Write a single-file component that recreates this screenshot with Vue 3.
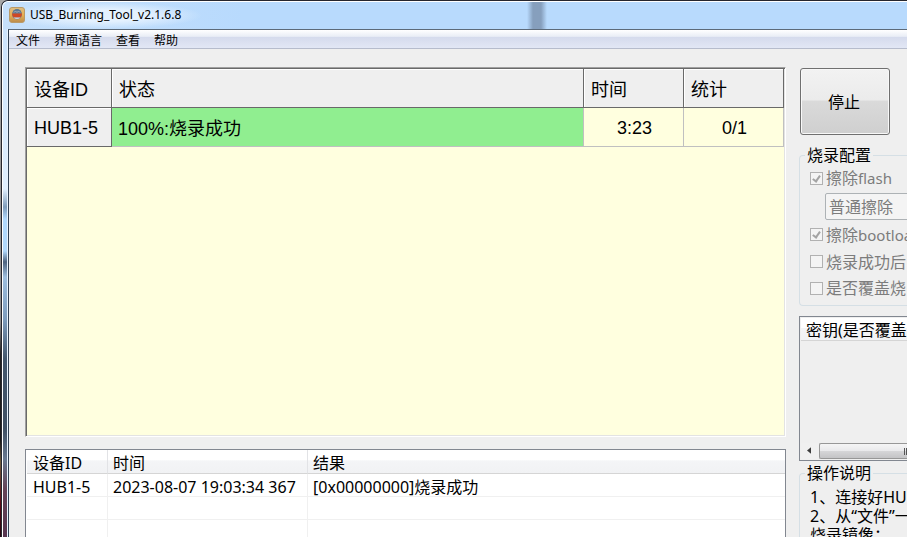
<template>
  <div class="desktop">
    <div class="window">
      <header class="titlebar">
        <svg class="app-icon" viewBox="0 0 16 16">
          <defs>
            <linearGradient id="gold" x1="0" y1="0" x2="0" y2="1">
              <stop offset="0" stop-color="#dcbd85" />
              <stop offset="0.5" stop-color="#e9b052" />
              <stop offset="1" stop-color="#b98a4c" />
            </linearGradient>
          </defs>
          <rect x="0.5" y="0.5" width="15" height="15" rx="2.5" fill="url(#gold)" stroke="#b99a68" />
          <circle cx="8" cy="7.5" r="5" fill="#7b8088" />
          <path d="M3.5 6.5 A4.5 4.5 0 0 1 12.5 6.5 Z" fill="#5b7895" />
          <path d="M5 5.5 L6.5 4 L8 5.5 L9.5 4 L11 5.5" stroke="#a9b0b8" stroke-width="1" fill="none" />
          <path d="M3 6.5 H13 Q13 9 11 10.5 H5 Q3 9 3 6.5 Z" fill="#cf4724" />
          <path d="M4.5 10.5 H11.5 Q8 13.5 4.5 10.5 Z" fill="#cfd3da" />
        </svg>
        <span class="title">USB_Burning_Tool_v2.1.6.8</span>
      </header>

      <div class="body">
        <div class="frame-left"></div>
        <div class="client">
          <nav class="menubar">
            <button v-for="item in menus" :key="item" type="button">{{ item }}</button>
          </nav>

          <div class="content">
            <main class="main">
              <div class="device-panel">
                <table class="device-table">
                  <thead>
                    <tr>
                      <th class="col-id">设备ID</th>
                      <th>状态</th>
                      <th class="col-num">时间</th>
                      <th class="col-num">统计</th>
                    </tr>
                  </thead>
                  <tbody>
                    <tr v-for="dev in devices" :key="dev.id">
                      <th>{{ dev.id }}</th>
                      <td class="status">{{ dev.status }}</td>
                      <td class="num">{{ dev.time }}</td>
                      <td class="num">{{ dev.count }}</td>
                    </tr>
                  </tbody>
                </table>
              </div>

              <div class="log-panel">
                <table class="log-table">
                  <thead>
                    <tr>
                      <th class="log-id">设备ID</th>
                      <th class="log-time">时间</th>
                      <th>结果</th>
                    </tr>
                  </thead>
                  <tbody>
                    <tr v-for="(log, index) in logs" :key="index">
                      <td>{{ log.id }}</td>
                      <td>{{ log.time }}</td>
                      <td>{{ log.result }}</td>
                    </tr>
                  </tbody>
                </table>
              </div>
            </main>

            <aside class="side">
              <button type="button" class="stop">停止</button>

              <fieldset class="group config">
                <legend>烧录配置</legend>
                <label class="check">
                  <input v-model="eraseFlash" type="checkbox" disabled />
                  <span>擦除<small>flash</small></span>
                </label>
                <select v-model="eraseMode" class="combo" aria-label="擦除flash" disabled>
                  <option>普通擦除</option>
                </select>
                <label class="check">
                  <input v-model="eraseBoot" type="checkbox" disabled />
                  <span>擦除<small>bootloader</small></span>
                </label>
                <label class="check">
                  <input v-model="reset" type="checkbox" disabled />
                  <span>烧录成功后</span>
                </label>
                <label class="check">
                  <input v-model="overwrite" type="checkbox" disabled />
                  <span>是否覆盖烧</span>
                </label>
              </fieldset>

              <div class="key-list">
                <div class="key-head">密钥(是否覆盖</div>
                <div class="key-body"></div>
                <div class="hscroll">
                  <button type="button" class="arrow" aria-label="left">
                    <svg viewBox="0 0 5 8"><path d="M5 0 V8 L0 4 Z" fill="#3c3c3c" /></svg>
                  </button>
                  <div class="thumb"><i></i></div>
                </div>
              </div>

              <fieldset class="group guide">
                <legend>操作说明</legend>
                <p v-for="line in guide" :key="line">{{ line }}</p>
              </fieldset>
            </aside>
          </div>
        </div>
      </div>
    </div>
  </div>
</template>

<script setup>
import { ref } from 'vue';

const menus = ['文件', '界面语言', '查看', '帮助'];

// 设备列表
const devices = ref([
  { id: 'HUB1-5', status: '100%:烧录成功', time: '3:23', count: '0/1' }
]);

// 烧录记录, 后面是空行
const logs = ref([
  { id: 'HUB1-5', time: '2023-08-07 19:03:34 367', result: '[0x00000000]烧录成功' },
  {},
  {}
]);

// 烧录配置
const eraseFlash = ref(true);
const eraseMode = ref('普通擦除');
const eraseBoot = ref(true);
const reset = ref(false);
const overwrite = ref(false);

const guide = ['1、连接好HUB', '2、从“文件”一', '烧录镜像；'];
</script>

<style>
body {
  margin: 0;
  overflow: hidden;
}
</style>

<style scoped>
.desktop {
  box-sizing: border-box;
  height: 100vh;
  padding-left: 1px;
  background: linear-gradient(#a8a8a8, #8a8a8a 60%, #222 66%, #181818 82%, #6b5a3c 86%, #5a0a18 94%, #220810);
  font-family: "Noto Sans", "Noto Sans CJK SC", sans-serif;
  font-size: 16px;
  color: #000;
  overflow: hidden;
}

button,
select {
  font: inherit;
  color: inherit;
}

table {
  width: 100%;
  border-collapse: separate;
  border-spacing: 0;
  table-layout: fixed;
}

th,
td {
  box-sizing: border-box;
  padding: 0;
  font-weight: normal;
  text-align: left;
  white-space: nowrap;
}

.window {
  box-sizing: border-box;
  display: flex;
  flex-direction: column;
  height: 100%;
  border-top: 1px solid #26262e;
  border-left: 1px solid #26262e;
  border-top-left-radius: 7px;
  background: #b8dafd;
  overflow: hidden;
}

/* 标题栏 */
.titlebar {
  display: flex;
  flex: none;
  align-items: center;
  gap: 5px;
  box-sizing: border-box;
  height: 28px;
  padding: 0 0 2px 6px;
  border-top: 1px solid #fff;
  border-left: 1px solid #fff;
  border-top-left-radius: 6px;
  background:
    linear-gradient(90deg, transparent, #869fbd 6px, #869fbd 14px, transparent) 524px 0 / 20px 100% no-repeat,
    radial-gradient(ellipse at center, #e4f1fe 30%, transparent 70%) 0 0 / 200px 100% no-repeat,
    linear-gradient(90deg, #c6e0fb, #b8dafd 240px);
}

.app-icon {
  width: 16px;
  height: 16px;
}

.title {
  font-size: 12px;
}

.body {
  display: flex;
  flex: 1;
  min-height: 0;
}

.frame-left {
  box-sizing: border-box;
  flex: none;
  width: 6px;
  border-left: 1px solid #fff;
  border-right: 1px solid #e8f3ff;
  background: linear-gradient(#cbe3fc 0, #e0effe 160px, #7f9cba 178px, #b0d8fc 190px, #b0d8fc 222px, #4e6480 233px, #9dbede 248px, #7d9cbd 290px, #43576d 330px, #3f5064 400px, #687990 430px, #664458 460px, #57344e 510px);
}

.client {
  display: flex;
  flex: 1;
  flex-direction: column;
  min-width: 0;
  border-top: 1px solid #5c6a79;
  border-left: 1px solid #2f3f52;
  background: #efefef;
}

/* 菜单栏 */
.menubar {
  display: flex;
  flex: none;
  gap: 14px;
  box-sizing: border-box;
  height: 19px;
  padding-left: 7px;
  border-bottom: 1px solid #b6bccc;
  background: linear-gradient(#fff, #e9edf6 36%, #d4daec 37%, #e2e7f5);
}

.menubar button {
  padding: 2px 0 0;
  border: none;
  background: none;
  font-size: 12px;
  line-height: 18px;
}

.content {
  display: flex;
  flex: 1;
  gap: 13px;
  min-height: 0;
  padding: 18px 0 0 16px;
}

.main {
  display: flex;
  flex: 1;
  flex-direction: column;
  gap: 12px;
  min-width: 0;
}

/* 设备表格 */
.device-panel {
  flex: 1;
  min-height: 0;
  border: 1px solid;
  border-color: #a0a0a0 #fff #fff #a0a0a0;
  background: #ffffdf;
  box-shadow: inset 1px 1px #696969, inset -1px -1px #e3e3e3;
  padding: 1px;
  font-family: "Liberation Sans", "Noto Sans CJK SC", sans-serif;
  font-size: 18px;
}

.device-table th,
.device-table td {
  height: 39px;
  padding-left: 7px;
  border-right: 1px solid #c0c0c0;
  border-bottom: 1px solid #c0c0c0;
}

.device-table th {
  border-color: #696969;
  background: #efefef;
  box-shadow: inset 1px 1px #fff;
}

.device-table .col-id {
  width: 85px;
}

.device-table .col-num {
  width: 100px;
}

.device-table tbody th,
.device-table .num {
  padding-top: 2px;
}

.device-table .status {
  padding-left: 6px;
  background: #90ee90;
}

.device-table .num {
  padding-left: 2px;
  text-align: center;
}

/* 烧录记录 */
.log-panel {
  flex: none;
  box-sizing: border-box;
  height: 88px;
  padding-left: 1px;
  border: 1px solid #828790;
  border-bottom: none;
  background: #fff;
  overflow: hidden;
}

.log-table th,
.log-table td {
  height: 23px;
  padding: 4px 0 0 5px;
  border-right: 1px solid #f0f0f0;
  border-bottom: 1px solid #f0f0f0;
  line-height: 18px;
}

.log-table th {
  height: 24px;
  padding-top: 3px;
  border-right-color: #e2e3e6;
  border-bottom-color: #d5d5d5;
  background: linear-gradient(#fff 45%, #f4f5f7 46%, #f1f2f4);
}

.log-table .log-id {
  width: 81px;
}

.log-table .log-time {
  width: 200px;
}

.log-table th:first-child,
.log-table td:first-child {
  padding-left: 6px;
}

.log-table th:last-child,
.log-table td:last-child {
  border-right: none;
}

/* 右侧栏 */
.side {
  display: flex;
  flex: none;
  flex-direction: column;
  width: 108px;
  overflow: hidden;
  white-space: nowrap;
}

.stop {
  flex: none;
  width: 90px;
  height: 67px;
  margin: 1px 0 0 1px;
  padding: 0 2px 2px 0;
  border: 1px solid #707070;
  border-radius: 3px;
  background: linear-gradient(#f2f2f2, #ebebeb 48%, #dadada 49%, #cfcfcf);
  box-shadow: inset 0 0 0 1px #f8f8f8;
}

.group {
  flex: none;
  box-sizing: border-box;
  min-width: 0;
  margin: 0;
  padding: 0 0 0 10px;
  border: 1px solid #d5dfe5;
  border-right: none;
  border-radius: 4px 0 0 4px;
}

.group legend {
  margin-left: -5px;
  padding: 0 2px;
  line-height: 18px;
}

.config {
  height: 160px;
  margin-top: 11px;
}

.check {
  display: flex;
  align-items: center;
  gap: 3px;
  height: 27px;
  color: #7c7c7c;
}

.check:last-child {
  height: 26px;
}

.config legend + .check {
  height: 28px;
}

.check span {
  padding-bottom: 2px;
}

.check small {
  font-size: 15px;
}

.check input {
  appearance: none;
  flex: none;
  box-sizing: border-box;
  width: 13px;
  height: 13px;
  margin: 0;
  border: 1px solid #b1b1b1;
  background: #f4f4f4;
}

.check input:checked::before {
  content: "";
  display: block;
  width: 3px;
  height: 6px;
  margin: 1px 0 0 3px;
  border: solid #a4a4a4;
  border-width: 0 2px 2px 0;
  transform: rotate(35deg);
}

.combo {
  appearance: none;
  display: block;
  box-sizing: border-box;
  width: 96px;
  height: 27px;
  margin: 1px 0 1px 15px;
  padding: 0 3px;
  border: 1px solid #adb2b5;
  border-radius: 2px;
  background: #f4f4f4;
  color: #7c7c7c;
  opacity: 1;
}

.key-list {
  flex: none;
  display: flex;
  flex-direction: column;
  box-sizing: border-box;
  height: 145px;
  margin-top: 10px;
  padding: 1px 0 1px 1px;
  border: 1px solid #828790;
  border-right: none;
}

.key-head {
  box-sizing: border-box;
  height: 23px;
  padding-left: 5px;
  border-bottom: 1px solid #d5d5d5;
  background: linear-gradient(#fff 45%, #f4f5f7 46%, #f1f2f4);
  line-height: 24px;
}

.key-body {
  flex: 1;
}

.hscroll {
  display: flex;
  height: 16px;
  background: #f0f0f0;
}

.arrow {
  display: flex;
  align-items: center;
  justify-content: center;
  width: 18px;
  padding: 0 2px 2px 0;
  border: none;
  background: none;
}

.arrow svg {
  width: 4px;
  height: 7px;
}

.thumb {
  display: flex;
  flex: 1;
  align-items: center;
  justify-content: flex-end;
  border: 1px solid #979797;
  border-right: none;
  border-radius: 2px 0 0 2px;
  background: linear-gradient(#f5f5f5, #e9e9eb 48%, #d6d6d8 50%, #c4c4c6);
}

.thumb i {
  width: 1px;
  height: 7px;
  border: solid #555;
  border-width: 0 1px;
}

.guide {
  height: 120px;
  margin-top: 3px;
}

.guide legend + p {
  margin-top: 6px;
}

.guide p {
  margin: 0;
  line-height: 19px;
}
</style>
